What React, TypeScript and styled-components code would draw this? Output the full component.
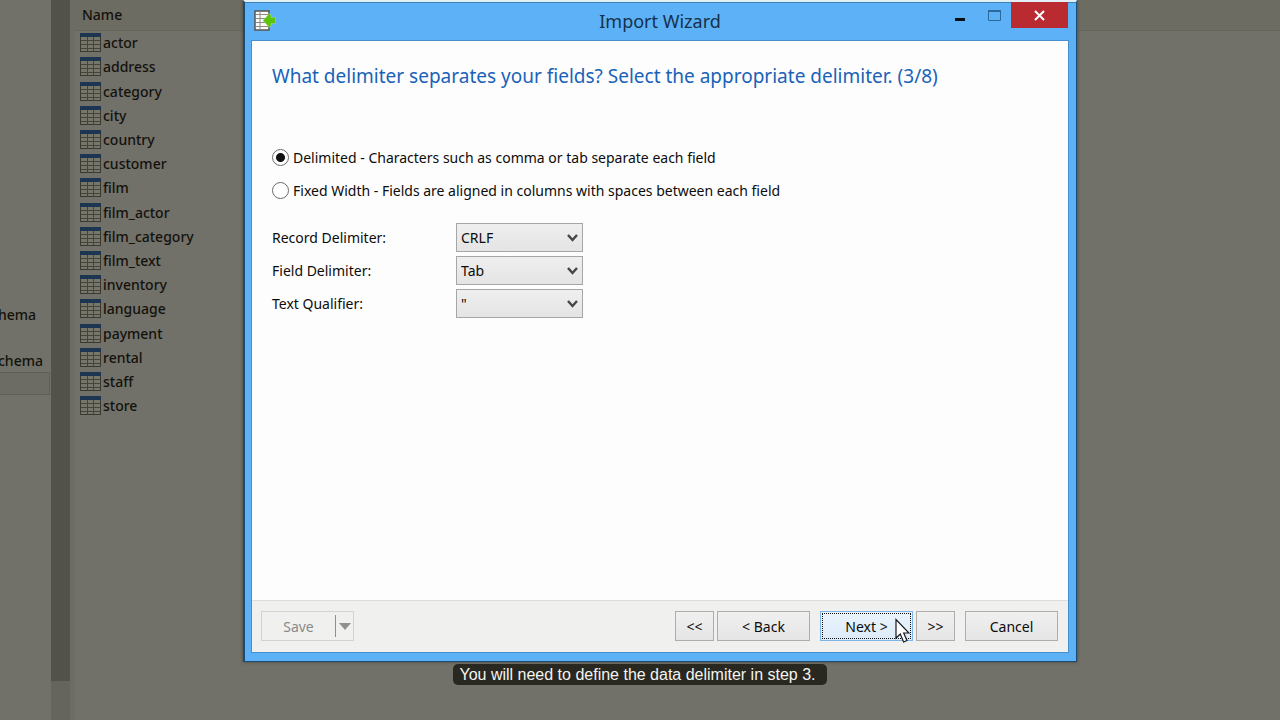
import React, { useState } from "react";
import styled, { createGlobalStyle, css } from "styled-components";

const uiFont = `"Noto Sans", "Open Sans", sans-serif`;

const GlobalStyle = createGlobalStyle`
  *, *::before, *::after { box-sizing: border-box; }
  body { margin: 0; font-family: ${uiFont}; font-size: 14px; }
  button, select, input { font: inherit; color: inherit; margin: 0; }
`;

const Screen = styled.main`
  position: relative;
  min-height: 100vh;
  overflow: hidden;
  background: #727169;
`;

const Backdrop = styled.div`
  display: grid;
  grid-template-columns: 51px 19px 5px 1fr;
  min-height: 100vh;
  color: #13110d;
  font-weight: 500;
`;

const Tree = styled.ul`
  margin: 0;
  padding: 303px 1px 0 0;
  list-style: none;
  overflow: hidden;
`;

const TreeRow = styled.li<{ $selected?: boolean }>`
  height: 23px;
  line-height: 21px;
  text-indent: -2px;
  border: 1px solid ${(p) => (p.$selected ? "#605f57" : "transparent")};
  border-left: 0;
  background: ${(p) => (p.$selected ? "#6d6c64" : "transparent")};
`;

const ScrollTrack = styled.div`
  display: flex;
  background: #66655d;
  padding-bottom: 39px;
`;

const ScrollThumb = styled.div`
  flex: 1;
  background: #53524a;
`;

const Splitter = styled.div`
  background: #6d6c64;
`;

const ObjectTable = styled.table`
  align-self: start;
  width: 100%;
  height: 418px;
  border-collapse: collapse;
`;

const NameHeading = styled.th`
  height: 30px;
  padding: 0 7px;
  line-height: 20px;
  text-align: left;
  font-weight: 500;
  background: #6d6c63;
  border-bottom: 1px solid #66655d;
`;

const ObjectCell = styled.td`
  padding: 0 5px;
`;

const ObjectName = styled.div`
  display: flex;
  align-items: center;
  gap: 2px;
  height: 24px;
`;

const Overlay = styled.div`
  position: absolute;
  inset: 0;
  display: flex;
  flex-direction: column;
  align-items: center;
  gap: 2px;
  padding-bottom: 35px;
`;

const WindowSlot = styled.div`
  flex: 1;
  align-self: stretch;
  display: grid;
  grid-template-columns: 243fr 834fr 203fr;
`;

const Window = styled.section`
  grid-column: 2;
  display: flex;
  flex-direction: column;
  padding: 0 7px 8px 6px;
  border: 2px solid #1b4a72;
  border-right-width: 1px;
  border-bottom-width: 1px;
  border-top: 2px solid #e3eff8;
  background: #5db1f6;
  box-shadow: inset 0 1px 0 #3f82b8, 0 0 3px #45443d;
`;

const TitleBar = styled.header`
  display: grid;
  grid-template-columns: 1fr auto 1fr;
  align-items: start;
  height: 38px;
  color: #16304a;
`;

const AppIcon = styled.span`
  display: flex;
  padding: 8px 0 0 3px;
`;

const WindowTitle = styled.h1`
  margin: 0;
  padding-top: 7px;
  font-size: 18px;
  line-height: 24px;
  font-weight: 400;
`;

const WindowControls = styled.div`
  display: flex;
  justify-content: flex-end;
  padding-right: 1px;
`;

const ControlButton = styled.button<{ $close?: boolean }>`
  display: flex;
  align-items: center;
  justify-content: center;
  width: ${(p) => (p.$close ? "57px" : "34px")};
  height: 26px;
  padding: 0;
  border: 0;
  background: ${(p) => (p.$close ? "#b92b31" : "transparent")};
`;

const Body = styled.form`
  flex: 1;
  display: flex;
  flex-direction: column;
  border: 1px solid #4590cd;
  background: #f0f0ee;
`;

const Step = styled.div`
  flex: 1;
  padding: 20px;
  background: #fdfdfd;
  border-bottom: 1px solid #dcdcdc;
  color: #0c0c0c;
`;

const Question = styled.h2`
  margin: 0 0 50px;
  font-size: 19px;
  line-height: 30px;
  font-weight: 400;
  color: #1a62b8;
`;

const Options = styled.fieldset`
  margin: 0 0 14px;
  padding: 0;
  border: 0;
`;

const Option = styled.label`
  display: flex;
  align-items: center;
  gap: 4px;
  height: 33px;
`;

const Radio = styled.input`
  appearance: none;
  width: 17px;
  height: 17px;
  border: 1px solid #6a6a6a;
  border-radius: 50%;
  background: #fff;
  &:checked {
    background: radial-gradient(circle, #111 0 4px, #fff 5px);
  }
`;

const Field = styled.div`
  display: grid;
  grid-template-columns: 184px 127px;
  align-items: center;
  height: 33px;
`;

const SelectBox = styled.div`
  display: grid;
  align-items: center;
  > * { grid-area: 1 / 1; }
  > svg { justify-self: end; margin-right: 5px; pointer-events: none; }
`;

const Select = styled.select`
  appearance: none;
  width: 100%;
  height: 29px;
  padding: 0 4px;
  border: 1px solid #a6a6a6;
  border-radius: 0;
  background: linear-gradient(#efefef, #e4e4e4);
`;

const Footer = styled.footer`
  display: flex;
  align-items: flex-start;
  gap: 10px;
  height: 51px;
  padding: 10px 10px 0 9px;
  color: #0c0c0c;
`;

const SplitButton = styled.div`
  display: flex;
  align-items: center;
  width: 93px;
  height: 30px;
  margin-right: auto;
  border: 1px solid #d3d3d1;
  color: #8a8a8a;
`;

const SplitPart = styled.button<{ $arrow?: boolean }>`
  display: flex;
  align-items: center;
  justify-content: center;
  height: 22px;
  padding: 0;
  border: 0;
  background: transparent;
  ${(p) =>
    p.$arrow
      ? css`width: 18px; border-left: 1px solid #8f8f8f;`
      : css`flex: 1;`}
`;

const ButtonPair = styled.div`
  display: flex;
  gap: 3px;
`;

const Button = styled.button<{ $narrow?: boolean; $primary?: boolean }>`
  position: relative;
  width: ${(p) => (p.$narrow ? "39px" : "93px")};
  height: 30px;
  padding: 0;
  border: 1px solid #adadab;
  background: linear-gradient(#f0f0f0, #e5e5e5);
  ${(p) =>
    p.$primary &&
    css`
      border-color: #7eb4ea;
      background: linear-gradient(#ebf4fc, #dcebfa);
      outline: 1px dotted #111;
      outline-offset: -3px;
    `}
`;

const Pointer = styled.svg`
  position: absolute;
  left: 74px;
  top: 6px;
  z-index: 1;
  pointer-events: none;
`;

const Caption = styled.p`
  margin: 0;
  padding: 0 11px 0 6px;
  border-radius: 5px;
  background: #282720;
  color: #f4f4f0;
  font: 16px/21px "Liberation Sans", Arial, sans-serif;
`;

const TableIcon = () => (
  <svg width="21" height="19" viewBox="0 0 21 19" aria-hidden="true">
    <rect x="0.5" y="0.5" width="20" height="18" fill="#77766b" stroke="#3a3930" />
    <rect x="0" y="0" width="21" height="4" fill="#1d3550" />
    <path d="M1 7.500h19M1 11.500h19M1 15.500h19M7.500 4v14M13.500 4v14" stroke="#45443b" fill="none" />
  </svg>
);

const ImportIcon = () => (
  <svg width="22" height="21" viewBox="0 0 22 21" aria-hidden="true">
    <rect x="1" y="1" width="14" height="19" fill="#fafafa" stroke="#56544f" strokeWidth="1.500" />
    <path d="M2 4.500h12M2 8.500h12M2 12.500h12M2 16.500h12M6 2v17" stroke="#8b8983" fill="none" />
    <path
      d="M9 10.500L15.500 3.500L17 5v2.500h4.500v6H17V16l-1.500 1.500z"
      fill="#5cc40c"
      stroke="#a9dc86"
      strokeWidth="0.500"
    />
  </svg>
);

const Chevron = () => (
  <svg width="11" height="9" viewBox="0 0 11 9" aria-hidden="true">
    <path d="M1 2L5.500 7L10 2" fill="none" stroke="#464646" strokeWidth="2.500" />
  </svg>
);

const TABLES = [
  "actor", "address", "category", "city", "country", "customer", "film", "film_actor",
  "film_category", "film_text", "inventory", "language", "payment", "rental", "staff", "store",
];

const FIELDS = [
  { id: "record", label: "Record Delimiter:", options: ["CRLF", "CR", "LF"] },
  { id: "field", label: "Field Delimiter:", options: ["Tab", "Comma", "Space"] },
  { id: "qualifier", label: "Text Qualifier:", options: ['"', "'"] },
];

const FORMATS = [
  { id: "delimited", label: "Delimited - Characters such as comma or tab separate each field" },
  { id: "fixed", label: "Fixed Width - Fields are aligned in columns with spaces between each field" },
];

export default function App() {
  const [format, setFormat] = useState("delimited");

  return (
    <Screen>
      <GlobalStyle />
      <Backdrop>
        <Tree>
          <TreeRow>hema</TreeRow>
          <TreeRow />
          <TreeRow>chema</TreeRow>
          <TreeRow $selected />
        </Tree>
        <ScrollTrack>
          <ScrollThumb />
        </ScrollTrack>
        <Splitter />
        <ObjectTable>
          <thead>
            <tr>
              <NameHeading>Name</NameHeading>
            </tr>
          </thead>
          <tbody>
            {TABLES.map((name) => (
              <tr key={name}>
                <ObjectCell>
                  <ObjectName>
                    <TableIcon />
                    {name}
                  </ObjectName>
                </ObjectCell>
              </tr>
            ))}
          </tbody>
        </ObjectTable>
      </Backdrop>

      <Overlay>
        <WindowSlot>
          <Window aria-label="Import Wizard">
            <TitleBar>
              <AppIcon>
                <ImportIcon />
              </AppIcon>
              <WindowTitle>Import Wizard</WindowTitle>
              <WindowControls>
                <ControlButton type="button" aria-label="Minimize">
                  <svg width="10" height="20" viewBox="0 0 10 20">
                    <rect y="13" width="10" height="3" fill="#0a0f14" />
                  </svg>
                </ControlButton>
                <ControlButton type="button" aria-label="Maximize">
                  <svg width="13" height="11" viewBox="0 0 13 11">
                    <path d="M0.500 1h12v9.500h-12z" fill="none" stroke="#2c6a9c" />
                    <path d="M0 1h13" stroke="#2c6a9c" strokeWidth="2" />
                  </svg>
                </ControlButton>
                <ControlButton type="button" aria-label="Close" $close>
                  <svg width="11" height="11" viewBox="0 0 11 11">
                    <path d="M1 1l9 9M10 1l-9 9" stroke="#fff" strokeWidth="2" />
                  </svg>
                </ControlButton>
              </WindowControls>
            </TitleBar>
            <Body onSubmit={(e) => e.preventDefault()}>
              <Step>
                <Question>
                  What delimiter separates your fields? Select the appropriate delimiter. (3/8)
                </Question>
                <Options aria-label="File format">
                  {FORMATS.map((f) => (
                    <Option key={f.id}>
                      <Radio
                        type="radio"
                        name="format"
                        checked={format === f.id}
                        onChange={() => setFormat(f.id)}
                      />
                      {f.label}
                    </Option>
                  ))}
                </Options>
                {FIELDS.map((f) => (
                  <Field key={f.id}>
                    <label htmlFor={f.id}>{f.label}</label>
                    <SelectBox>
                      <Select id={f.id}>
                        {f.options.map((o) => (
                          <option key={o}>{o}</option>
                        ))}
                      </Select>
                      <Chevron />
                    </SelectBox>
                  </Field>
                ))}
              </Step>
              <Footer>
                <SplitButton>
                  <SplitPart type="button" disabled>Save</SplitPart>
                  <SplitPart type="button" disabled $arrow aria-label="Save options">
                    <svg width="12" height="7" viewBox="0 0 12 7">
                      <path d="M0 0h12l-6 7z" fill="#8f8f8f" />
                    </svg>
                  </SplitPart>
                </SplitButton>
                <ButtonPair>
                  <Button type="button" $narrow>&lt;&lt;</Button>
                  <Button type="button">&lt; Back</Button>
                </ButtonPair>
                <ButtonPair>
                  <Button type="submit" $primary>
                    Next &gt;
                    <Pointer width="15" height="26" viewBox="0 0 15 26" aria-hidden="true">
                      <path
                        d="M1 1.500V20l4.300-4 3.300 8 3.400-1.500-3.300-7.500H14z"
                        fill="#fff"
                        stroke="#16191d"
                        strokeWidth="1.200"
                      />
                    </Pointer>
                  </Button>
                  <Button type="button" $narrow>&gt;&gt;</Button>
                </ButtonPair>
                <Button type="button">Cancel</Button>
              </Footer>
            </Body>
          </Window>
        </WindowSlot>
        <Caption>You will need to define the data delimiter in step 3.</Caption>
      </Overlay>
    </Screen>
  );
}
